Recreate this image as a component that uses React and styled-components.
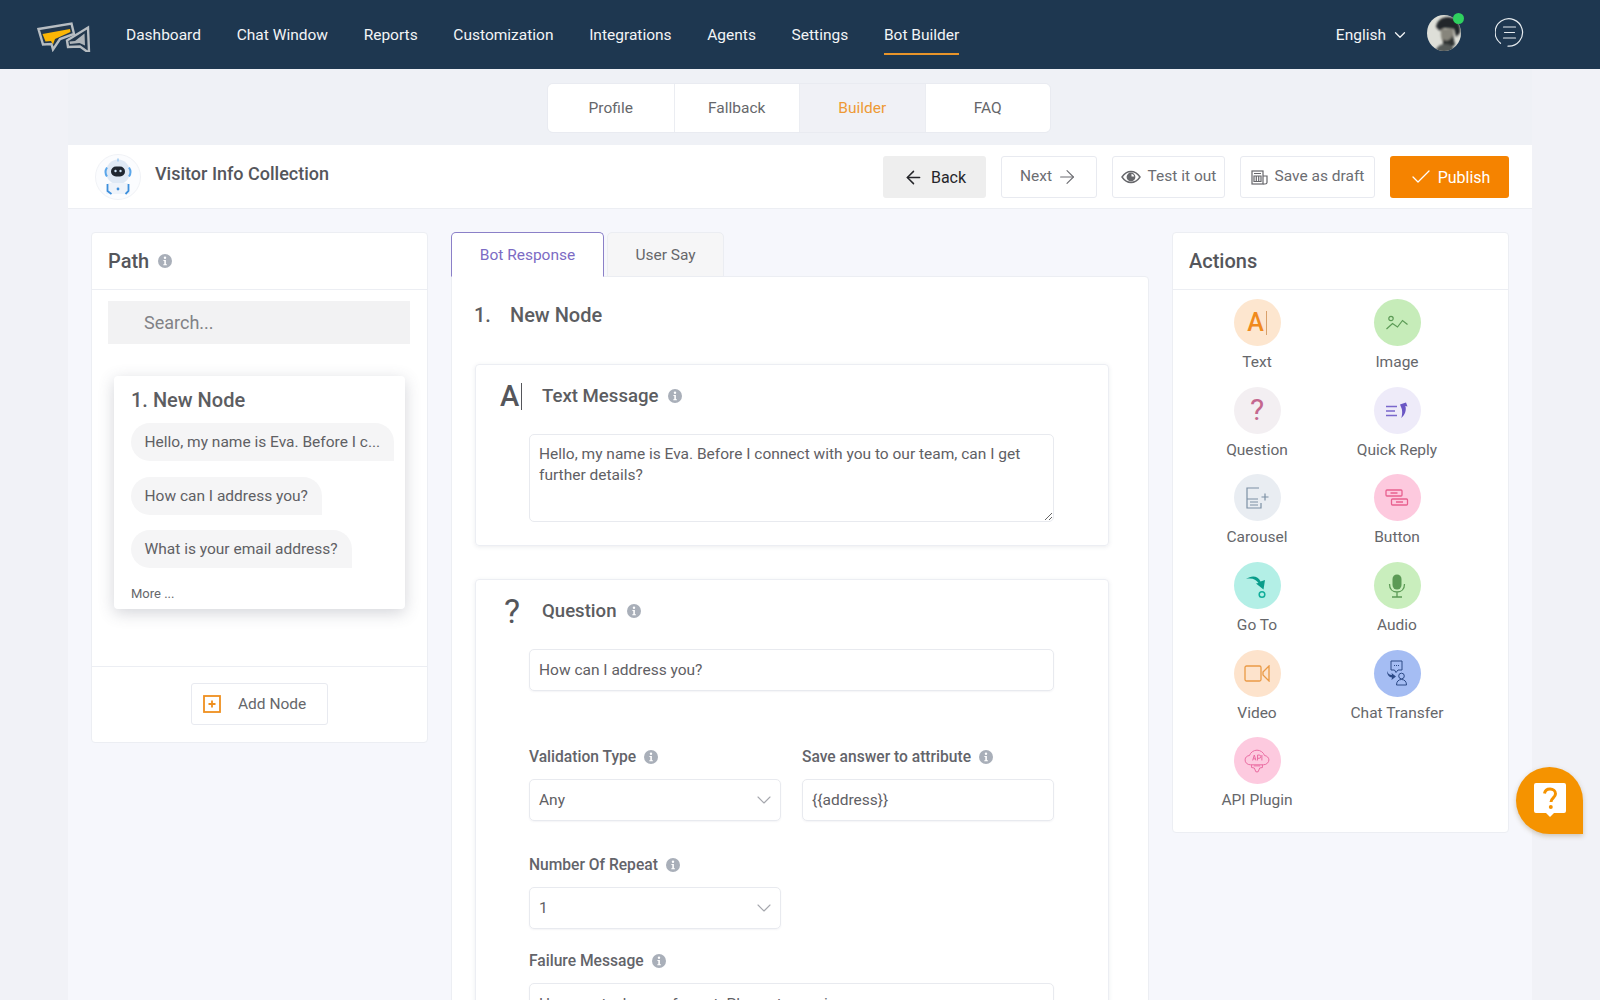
import React from "react";
import styled, { createGlobalStyle } from "styled-components";
import { ArrowLeft, ArrowRight, Check, ChevronDown } from "lucide-react";

const GlobalStyle = createGlobalStyle`
  html, body { margin: 0; padding: 0; height: 100%; }
  body { font-family: Roboto, "Liberation Sans", sans-serif; background: #f1f2f7; color: #5c5d61; }
  * { box-sizing: border-box; }
`;

const Page = styled.div`
  position: relative;
  height: 100vh;
  overflow: hidden;
  display: flex;
  flex-direction: column;
`;

/* top navigation */
const TopBar = styled.header`
  flex: none;
  height: 69px;
  background: #1e3750;
  display: flex;
  align-items: center;
  padding: 0 76px 0 37px;
`;
const Logo = styled.svg`
  flex: none;
  width: 54px;
  height: 34px;
  margin-right: 35px;
`;
const Nav = styled.nav`
  display: flex;
  gap: 35.7px;
`;
const NavLink = styled.a`
  padding: 10px 0 8px;
  line-height: 20px;
  font-size: 15.5px;
  color: #f2f4f6;
  border-bottom: 2px solid ${(p) => (p.$active ? "#e8942a" : "transparent")};
`;
const TopRight = styled.div`
  margin-left: auto;
  margin-bottom: 4px;
  display: flex;
  align-items: center;
`;
const Lang = styled.div`
  display: flex;
  align-items: center;
  gap: 5px;
  margin: 4px 18px 0 0;
  font-size: 15.5px;
  color: #f2f4f6;
`;
const AvatarWrap = styled.div`
  position: relative;
  width: 34px;
  height: 36px;
  margin-right: 34px;
`;
const OnlineDot = styled.span`
  position: absolute;
  top: -2px;
  right: -3px;
  width: 11px;
  height: 11px;
  border-radius: 50%;
  background: #2fd15f;
`;

/* page body */
const Content = styled.main`
  flex: 1;
  margin: 0 68px;
  background: #f6f7fc;
  min-height: 0;
`;
const TabsRow = styled.div`
  height: 76px;
  padding: 14px 2px 0 0;
  background: #eff1f6;
  display: flex;
  justify-content: center;
`;
const TabGroup = styled.div`
  display: flex;
  height: 50px;
  border: 1px solid #e9ebf1;
  border-radius: 6px;
  overflow: hidden;
`;
const Tab = styled.div`
  width: 125.5px;
  display: flex;
  align-items: center;
  justify-content: center;
  font-size: 15.5px;
  background: ${(p) => (p.$active ? "#f0f1f6" : "#fff")};
  color: ${(p) => (p.$active ? "#ee9a35" : "#66676b")};
  & + & { border-left: 1px solid #ebedf2; }
`;
const ToolBar = styled.div`
  height: 64px;
  background: #fff;
  border-bottom: 1px solid #eceef3;
  display: flex;
  align-items: center;
  padding: 0 23px 0 27px;
`;
const ToolTitle = styled.h1`
  margin: 0 0 7px 14px;
  font-size: 18px;
  font-weight: 500;
  color: #55565b;
`;
const ToolButtons = styled.div`
  margin-left: auto;
  display: flex;
  gap: 15px;
  margin-top: 1px;
`;
const ToolButton = styled.button`
  width: ${(p) => p.$w}px;
  height: 42px;
  padding: 0;
  display: flex;
  align-items: center;
  justify-content: center;
  gap: ${(p) => p.$gap || 7}px;
  font-family: inherit;
  font-size: ${(p) => (p.$tone === "ghost" ? 15.5 : 16)}px;
  border-radius: 3px;
  border: 1px solid ${(p) => (p.$tone === "ghost" ? "#e8eaf0" : "transparent")};
  background: ${(p) =>
    p.$tone === "dark" ? "#eeeeee" : p.$tone === "primary" ? "#f58300" : "#fff"};
  color: ${(p) =>
    p.$tone === "dark" ? "#25262a" : p.$tone === "primary" ? "#fff" : "#6c6d72"};
`;
const GhostLabel = styled.span`
  margin-top: -2px;
`;
const Columns = styled.div`
  display: flex;
  align-items: flex-start;
  gap: 23px;
  padding: 23px 23px 0;
`;
const SidePanel = styled.section`
  flex: none;
  width: 337px;
  background: #fff;
  border: 1px solid #eceef3;
  border-radius: 4px;
`;
const PanelHead = styled.div`
  height: 57px;
  border-bottom: 1px solid #eceef3;
  display: flex;
  align-items: center;
  gap: 9px;
  padding: 0 16px;
  font-size: 20px;
  font-weight: 500;
  color: #55565b;
`;

/* path panel */
const PathBody = styled.div`
  height: 376px;
  padding: 11px 17px 0 16px;
`;
const SearchBox = styled.div`
  height: 43px;
  background: #f2f2f3;
  padding-left: 36px;
  display: flex;
  align-items: center;
  font-size: 18px;
  color: #818286;
`;
const NodeCard = styled.div`
  width: 291px;
  height: 233px;
  margin: 32px 0 0 6px;
  padding: 12px 0 0 17px;
  background: #fff;
  border-radius: 4px;
  box-shadow: 0 4px 16px rgba(70, 75, 95, 0.24);
`;
const NodeTitle = styled.div`
  font-size: 20px;
  font-weight: 500;
  line-height: 24px;
  color: #5c5d61;
`;
const Bubbles = styled.div`
  margin-top: 11px;
  display: flex;
  flex-direction: column;
  align-items: flex-start;
  gap: 15.5px;
`;
const Bubble = styled.div`
  height: 38px;
  padding: 0 14px 0 13.5px;
  display: flex;
  align-items: center;
  font-size: 15.5px;
  color: #5f6064;
  background: #f5f5f6;
  border-radius: 19px 19px 0 19px;
`;
const MoreLink = styled.div`
  margin-top: 18px;
  font-size: 13px;
  color: #66676b;
`;
const PathFoot = styled.div`
  height: 76px;
  border-top: 1px solid #eceef3;
  display: flex;
  justify-content: center;
  padding-top: 16px;
`;
const AddNodeBtn = styled.button`
  width: 137px;
  height: 42px;
  padding: 0 0 0 11px;
  background: #fff;
  border: 1px solid #e8eaf0;
  border-radius: 3px;
  display: flex;
  align-items: center;
  gap: 17px;
  font-family: inherit;
  font-size: 15.5px;
  color: #66676b;
`;

/* centre */
const CenterCol = styled.div`
  flex: none;
  width: 698px;
  display: flex;
  flex-direction: column;
`;
const ResponseTabs = styled.div`
  display: flex;
  gap: 3px;
  height: 45px;
  margin-bottom: -1px;
`;
const ResponseTab = styled.div`
  width: ${(p) => p.$w}px;
  display: flex;
  align-items: center;
  justify-content: center;
  font-size: 15.5px;
  border-radius: 5px 5px 0 0;
  position: relative;
  z-index: 1;
  background: ${(p) => (p.$active ? "#fff" : "#f6f6f7")};
  color: ${(p) => (p.$active ? "#7c6bc4" : "#66676b")};
  border: 1px solid ${(p) => (p.$active ? "#8b80c8" : "#ebedf2")};
  border-bottom: ${(p) => (p.$active ? "1px solid #fff" : "1px solid #ebedf2")};
`;
const CenterPanel = styled.section`
  background: #fff;
  border: 1px solid #eceef3;
  border-radius: 0 4px 0 0;
  padding: 24px 39px 0 23px;
  height: 800px;
`;
const NodeHeading = styled.h2`
  margin: 0 0 35px -1px;
  line-height: 28px;
  font-size: 20px;
  font-weight: 500;
  color: #5c5d61;
  display: flex;
  gap: 19px;
`;
const BlockCard = styled.div`
  border: 1px solid #eceef3;
  border-radius: 4px;
  box-shadow: 0 1px 4px rgba(70, 75, 95, 0.1);
  padding: 19px 54px 23px 24px;
  & + & { margin-top: 33px; }
`;
const BlockHead = styled.div`
  display: flex;
  align-items: center;
  height: 24px;
  margin-bottom: 26px;
`;
const BlockIcon = styled.div`
  width: 42px;
  padding: ${(p) => p.$pad || "0"};
  font-size: ${(p) => p.$size}px;
  font-weight: ${(p) => p.$weight || 400};
  line-height: 24px;
  color: #55565b;
  display: flex;
  align-items: center;
`;
const Caret = styled.span`
  display: inline-block;
  width: 1px;
  height: ${(p) => p.$h}px;
  margin-left: 2px;
  background: ${(p) => p.$color};
`;
const BlockTitle = styled.div`
  font-size: 18.6px;
  font-weight: 500;
  color: #5c5d61;
  margin-right: 10px;
`;
const BlockBody = styled.div`
  margin-left: 29px;
`;
const MessageArea = styled.textarea`
  display: block;
  width: 100%;
  height: 88px;
  padding: 9px 9px;
  border: 1px solid #e8eaef;
  border-radius: 5px;
  font-family: inherit;
  font-size: 15.5px;
  line-height: 21px;
  color: #5f6064;
  outline: none;
`;
const Field = styled.div`
  height: 42px;
  padding: 0 4px 0 9px;
  display: flex;
  align-items: center;
  justify-content: space-between;
  border: 1px solid #e8eaef;
  border-radius: 5px;
  box-shadow: 0 1px 2px rgba(70, 75, 95, 0.06);
  font-size: 15.5px;
  color: #5f6064;
`;
const FormGrid = styled.div`
  display: grid;
  grid-template-columns: 252px 252px;
  column-gap: 21px;
  margin-top: ${(p) => p.$top}px;
`;
const FormGroup = styled.div`
  min-width: 0;
`;
const Label = styled.div`
  height: 20px;
  margin-bottom: 12px;
  display: flex;
  align-items: center;
  gap: 8px;
  font-size: 15.6px;
  font-weight: 500;
  color: #63646a;
`;

/* actions */
const ActionGrid = styled.div`
  display: grid;
  grid-template-columns: 140px 140px;
  row-gap: 14.7px;
  padding: 9px 0 22px 14px;
`;
const ActionItem = styled.div`
  display: flex;
  flex-direction: column;
  align-items: center;
  font-size: 15.5px;
  line-height: 20px;
  color: #66676b;
`;
const ActionCircle = styled.div`
  width: 47px;
  height: 47px;
  margin-bottom: 6px;
  border-radius: 50%;
  background: ${(p) => p.$bg};
  display: flex;
  align-items: center;
  justify-content: center;
`;
const CircleLetter = styled.span`
  font-size: ${(p) => p.$size}px;
  font-weight: ${(p) => p.$weight};
  color: ${(p) => p.$color};
  display: flex;
  align-items: center;
`;
const HelpFab = styled.button`
  position: absolute;
  left: 1516px;
  top: 767px;
  width: 67px;
  height: 67px;
  padding: 0;
  border: 0;
  background: #f59300;
  border-radius: 50% 50% 0 50%;
  box-shadow: 0 2px 5px rgba(120, 90, 30, 0.3);
  display: flex;
  align-items: center;
  justify-content: center;
`;

const InfoDot = () => (
  <svg width="14" height="14" viewBox="0 0 14 14">
    <circle cx="7" cy="7" r="7" fill="#a9afb9" />
    <circle cx="7" cy="3.7" r="1.2" fill="#fff" />
    <path d="M5.4 6h2.5v4.2h1v1.1H5.3v-1.1h1V7.1h-.9z" fill="#fff" />
  </svg>
);

const LogoMark = () => (
  <Logo viewBox="12 10 54 34">
    <path d="M42 32.500 63 19.500l1 24h-2l-7-5-12 .5z" fill="#23384d" stroke="#b7bdc2" strokeWidth="2.400" />
    <path d="M50 33 59.500 25.500l.5 12-5.500-2.500-9.500 1-.5-2.500z" fill="#aeb4b9" />
    <path d="M13.500 21 46.500 15.500 49 26 35 31l-7 10.500-1.500-5.500-8.500.5z" fill="#23384d" stroke="#b7bdc2" strokeWidth="2.400" strokeLinejoin="miter" />
    <path d="M17.500 26 45 21l.5 3-15.500 7-2 5.500-2-3.500-5.500.5z" fill="#fbb605" />
  </Logo>
);

const Avatar = () => (
  <svg width="34" height="36" viewBox="0 0 34 36">
    <defs>
      <clipPath id="avatarClip">
        <ellipse cx="17" cy="18" rx="17" ry="18" />
      </clipPath>
      <filter id="avatarSoft">
        <feGaussianBlur stdDeviation="0.9" />
      </filter>
    </defs>
    <g clipPath="url(#avatarClip)">
      <rect width="34" height="36" fill="#dedfd8" />
      <g filter="url(#avatarSoft)">
        <path d="M9 12C10 4 18 0 26 3c6 3 8 9 7 15l-4 4-2-8-10-1-4 3z" fill="#23272a" />
        <path d="M14 14h12c2 6 0 14-6 15-5 0-7-7-6-15z" fill="#87857b" />
        <path d="M16 24c3 3 7 2 10-4l2 10-8 4-4-4z" fill="#2f3232" />
        <path d="M8 38c1-6 5-9 10-9s9 3 11 9z" fill="#555a58" />
      </g>
    </g>
  </svg>
);

const MenuCircle = () => (
  <svg width="29" height="29" viewBox="0 0 29 29" fill="none" stroke="#e6ebef" strokeWidth="1.2" strokeLinecap="round">
    <path d="M5.500 25.300A13.700 13.700 0 1 1 13 28.100" />
    <path d="M8.500 9h12M9.500 14.500h10M8.500 20h12" />
  </svg>
);

const RobotBadge = () => (
  <svg width="46" height="46" viewBox="0 0 46 46" style={{ flex: "none" }}>
    <circle cx="23" cy="23" r="22.500" fill="#fbfcfe" stroke="#f0f2f6" />
    <ellipse cx="23" cy="18" rx="12" ry="12.500" fill="#dfe9f5" />
    <path d="M12 13.500c-2 3-2 6 0 9M34 13.500c2 3 2 6 0 9" stroke="#5aa6ea" strokeWidth="2" fill="none" />
    <rect x="16" y="12.500" width="14" height="10" rx="5" fill="#1f2630" />
    <circle cx="20.500" cy="17" r="1.200" fill="#cfe4f8" />
    <circle cx="25.500" cy="17" r="1.200" fill="#cfe4f8" />
    <path d="M23 4.500v3" stroke="#9cc8f0" strokeWidth="1.500" />
    <path d="M13 29h20l2 11H11z" fill="#eef3fa" />
    <path d="M12.500 30v7l4 3M33.500 30v7l-3 3" stroke="#3d8fdc" strokeWidth="1.800" fill="none" />
    <circle cx="23" cy="35" r="1.400" fill="#3d8fdc" />
  </svg>
);

const EyeIcon = () => (
  <svg width="20" height="14" viewBox="0 0 20 14">
    <path d="M1 7c2.500-3.700 5.500-5.500 9-5.500s6.500 1.800 9 5.500c-2.500 3.700-5.500 5.500-9 5.500S3.500 10.700 1 7z" fill="none" stroke="#66676b" strokeWidth="1.400" />
    <circle cx="10" cy="7" r="4.400" fill="#66676b" />
    <path d="M10.500 3.800a3.300 3.300 0 0 1 2.800 2.800h-2.800z" fill="#fff" />
  </svg>
);

const DraftIcon = () => (
  <svg width="17" height="15" viewBox="0 0 17 15" fill="none" stroke="#66676b" strokeWidth="1.200">
    <rect x="1" y="1" width="11" height="13" />
    <path d="M3 3.500h7M3 6h7v5.500H3zM5.300 6v5.500M7.700 6v5.500" />
    <path d="M12 6h4v6.500c0 1-1 1.500-2 1.500h-2" />
  </svg>
);

const PlusSquare = () => (
  <svg width="18" height="18" viewBox="0 0 18 18" fill="none" stroke="#ef8f1f" strokeWidth="1.800">
    <rect x="1" y="1" width="16" height="16" />
    <path d="M9 5.500v7M5.500 9h7" />
  </svg>
);

const ImageGlyph = () => (
  <svg width="24" height="18" viewBox="0 0 24 18" fill="none" stroke="#5b9a55" strokeWidth="1.200">
    <circle cx="6" cy="4.500" r="2.200" />
    <path d="M1.500 15 7.500 9.500l5 3.500 5-6.500 5 4" />
  </svg>
);

const QuickReplyGlyph = () => (
  <svg width="24" height="18" viewBox="0 0 24 18" fill="none">
    <path d="M1 5.500h11M1 10h9M1 14.500h11" stroke="#7a67cc" strokeWidth="1.500" />
    <path d="M15 3.500 21 1.500l1.500 4-2.200-.5c1.500 4-.5 9-4 12 1-3 1.500-8-.5-11.500z" fill="#6a56c4" />
  </svg>
);

const CarouselGlyph = () => (
  <svg width="24" height="22" viewBox="0 0 24 22" fill="none" stroke="#7c90a4" strokeWidth="1.200">
    <path d="M14 1H2v20h14v-5M2 12h11" />
    <path d="M5 15h8M5 18h8" strokeWidth="1" />
    <path d="M20 6.500v7M16.500 10h7" />
  </svg>
);

const ButtonGlyph = () => (
  <svg width="24" height="18" viewBox="0 0 24 18" fill="none" stroke="#e8608f" strokeWidth="1.300">
    <rect x="1" y="1" width="16" height="6" rx="1" />
    <rect x="6.500" y="10" width="16" height="6" rx="1" />
    <path d="M5.500 4h7M11 13h7" />
  </svg>
);

const GoToGlyph = () => (
  <svg width="24" height="26" viewBox="0 0 24 26" fill="none">
    <path d="M1 6c5.500-4 12-3.500 14.500 2.500L20 7l-1.500 9.500-7.500-6 2.500-.5C11 6.500 7 4.500 1 6z" fill="#0a9c8a" />
    <circle cx="17" cy="21.500" r="2.800" stroke="#11ad9a" strokeWidth="1.500" />
  </svg>
);

const MicGlyph = () => (
  <svg width="18" height="24" viewBox="0 0 18 24" fill="none">
    <rect x="4.500" y="0.500" width="9" height="15" rx="4.500" fill="#5b9a55" />
    <path d="M1.500 10c0 5 3 8 7.500 8s7.500-3 7.500-8M9 18v4.500M4 23h10" stroke="#5b9a55" strokeWidth="1.300" />
  </svg>
);

const VideoGlyph = () => (
  <svg width="26" height="17" viewBox="0 0 26 17" fill="none" stroke="#ea9a45" strokeWidth="1.300">
    <rect x="1" y="1" width="16" height="15" rx="1.500" />
    <path d="M25 1 19 7v3l6 6z" />
  </svg>
);

const TransferGlyph = () => (
  <svg width="22" height="26" viewBox="0 0 22 26" fill="none" stroke="#2c4a86" strokeWidth="1">
    <path d="M5 1h11v9h-4l-2 2.500L8.500 10H5z" />
    <path d="M8 5.500h1M10 5.500h1M12 5.500h1" />
    <path d="M1 11c1 3 3 4 5 4l-.5-2L10 16.500 5.500 20l.5-2.500c-3 0-5-3-5-6.500z" fill="#2c4a86" stroke="none" />
    <circle cx="15.500" cy="16" r="2.800" />
    <path d="M10.500 25c0-3.500 2-5.500 5-5.500s5 2 5 5.500z" />
  </svg>
);

const ApiGlyph = () => (
  <svg width="26" height="26" viewBox="0 0 24 24" fill="none" stroke="#e96aa0" strokeWidth="0.900">
    <path d="M6 15.500c-3 0-5-2-5-4.500s2-4 4-4c1-3 4-5 7-5s6 2 7 5c2 0 4 2 4 4s-2 4.500-5 4.500z" />
    <path d="M7 15.500v2.500l2.500.5L11 22h2l1.500-3.500L17 18v-2.500M9 16.500h6" />
    <path d="M8 11.500 9.500 6.500l1.500 5M8.500 10h2M12.500 11.500v-5H14a1.500 1.500 0 0 1 0 3h-1.500M16.500 6.500v5" />
  </svg>
);

const HelpBubble = () => (
  <svg width="32" height="35" viewBox="0 0 32 35">
    <path d="M2 0h28a2 2 0 0 1 2 2v26a2 2 0 0 1-2 2H20l-4 4-4-4H2a2 2 0 0 1-2-2V2a2 2 0 0 1 2-2z" fill="#fff" />
    <path d="M10.500 10.500c.5-3 2.800-4.500 5.500-4.500 3.200 0 5.500 2 5.500 4.800 0 4-4.500 4.200-4.500 8.200" fill="none" stroke="#f59300" strokeWidth="3" />
    <circle cx="16.800" cy="24" r="2" fill="#f59300" />
  </svg>
);

const navItems = ["Dashboard", "Chat Window", "Reports", "Customization", "Integrations", "Agents", "Settings", "Bot Builder"];
const pageTabs = ["Profile", "Fallback", "Builder", "FAQ"];
const bubbles = ["Hello, my name is Eva. Before I c...", "How can I address you?", "What is your email address?"];

const actions = [
  {
    name: "Text",
    bg: "#fde6cf",
    icon: (
      <CircleLetter $size={25} $weight={500} $color="#f08a1d">
        A<Caret $h={24} $color="#d9a06a" />
      </CircleLetter>
    ),
  },
  { name: "Image", bg: "#c6ecb9", icon: <ImageGlyph /> },
  { name: "Question", bg: "#f3eff2", icon: <CircleLetter $size={30} $weight={400} $color="#c4688f">?</CircleLetter> },
  { name: "Quick Reply", bg: "#eeebf9", icon: <QuickReplyGlyph /> },
  { name: "Carousel", bg: "#e9edf2", icon: <CarouselGlyph /> },
  { name: "Button", bg: "#fdc9de", icon: <ButtonGlyph /> },
  { name: "Go To", bg: "#b3efe6", icon: <GoToGlyph /> },
  { name: "Audio", bg: "#c9eebd", icon: <MicGlyph /> },
  { name: "Video", bg: "#fde3cc", icon: <VideoGlyph /> },
  { name: "Chat Transfer", bg: "#a5bdf3", icon: <TransferGlyph /> },
  { name: "API Plugin", bg: "#fdcadf", icon: <ApiGlyph /> },
];

export default function App() {
  return (
    <>
      <GlobalStyle />
      <Page>
        <TopBar>
          <LogoMark />
          <Nav>
            {navItems.map((item) => (
              <NavLink key={item} $active={item === "Bot Builder"}>
                {item}
              </NavLink>
            ))}
          </Nav>
          <TopRight>
            <Lang>
              English <ChevronDown size={18} strokeWidth={1.7} />
            </Lang>
            <AvatarWrap>
              <Avatar />
              <OnlineDot />
            </AvatarWrap>
            <MenuCircle />
          </TopRight>
        </TopBar>

        <Content>
          <TabsRow>
            <TabGroup>
              {pageTabs.map((tab) => (
                <Tab key={tab} $active={tab === "Builder"}>
                  {tab}
                </Tab>
              ))}
            </TabGroup>
          </TabsRow>

          <ToolBar>
            <RobotBadge />
            <ToolTitle>Visitor Info Collection</ToolTitle>
            <ToolButtons>
              <ToolButton $w={103} $tone="dark">
                <ArrowLeft size={21} strokeWidth={1.7} /> Back
              </ToolButton>
              <ToolButton $w={96} $tone="ghost" $gap={4}>
                <GhostLabel>Next</GhostLabel> <ArrowRight size={22} strokeWidth={1.2} />
              </ToolButton>
              <ToolButton $w={113} $tone="ghost">
                <EyeIcon /> <GhostLabel>Test it out</GhostLabel>
              </ToolButton>
              <ToolButton $w={135} $tone="ghost">
                <DraftIcon /> <GhostLabel>Save as draft</GhostLabel>
              </ToolButton>
              <ToolButton $w={119} $tone="primary" $gap={5}>
                <Check size={24} strokeWidth={1.3} /> Publish
              </ToolButton>
            </ToolButtons>
          </ToolBar>

          <Columns>
            <SidePanel>
              <PanelHead>
                Path <InfoDot />
              </PanelHead>
              <PathBody>
                <SearchBox>Search...</SearchBox>
                <NodeCard>
                  <NodeTitle>1. New Node</NodeTitle>
                  <Bubbles>
                    {bubbles.map((text) => (
                      <Bubble key={text}>{text}</Bubble>
                    ))}
                  </Bubbles>
                  <MoreLink>More ...</MoreLink>
                </NodeCard>
              </PathBody>
              <PathFoot>
                <AddNodeBtn>
                  <PlusSquare /> Add Node
                </AddNodeBtn>
              </PathFoot>
            </SidePanel>

            <CenterCol>
              <ResponseTabs>
                <ResponseTab $w={153} $active>
                  Bot Response
                </ResponseTab>
                <ResponseTab $w={117}>User Say</ResponseTab>
              </ResponseTabs>
              <CenterPanel>
                <NodeHeading>
                  <span>1.</span> New Node
                </NodeHeading>

                <BlockCard>
                  <BlockHead>
                    <BlockIcon $size={29} $weight={500}>
                      A<Caret $h={27} $color="#55565b" />
                    </BlockIcon>
                    <BlockTitle>Text Message</BlockTitle>
                    <InfoDot />
                  </BlockHead>
                  <BlockBody>
                    <MessageArea
                      readOnly
                      defaultValue="Hello, my name is Eva. Before I connect with you to our team, can I get further details?"
                    />
                  </BlockBody>
                </BlockCard>

                <BlockCard>
                  <BlockHead>
                    <BlockIcon $size={34} $pad="0 0 0 4px">?</BlockIcon>
                    <BlockTitle>Question</BlockTitle>
                    <InfoDot />
                  </BlockHead>
                  <BlockBody>
                    <Field>How can I address you?</Field>
                    <FormGrid $top={56}>
                      <FormGroup>
                        <Label>
                          Validation Type <InfoDot />
                        </Label>
                        <Field>
                          Any <ChevronDown size={24} strokeWidth={1.1} color="#a5a7ad" />
                        </Field>
                      </FormGroup>
                      <FormGroup>
                        <Label>
                          Save answer to attribute <InfoDot />
                        </Label>
                        <Field>{"{{address}}"}</Field>
                      </FormGroup>
                    </FormGrid>
                    <FormGrid $top={34}>
                      <FormGroup>
                        <Label>
                          Number Of Repeat <InfoDot />
                        </Label>
                        <Field>
                          1 <ChevronDown size={24} strokeWidth={1.1} color="#a5a7ad" />
                        </Field>
                      </FormGroup>
                    </FormGrid>
                    <FormGrid $top={22}>
                      <FormGroup>
                        <Label>
                          Failure Message <InfoDot />
                        </Label>
                      </FormGroup>
                    </FormGrid>
                    <Field>Hmm, not a known format. Please try again</Field>
                  </BlockBody>
                </BlockCard>
              </CenterPanel>
            </CenterCol>

            <SidePanel>
              <PanelHead>Actions</PanelHead>
              <ActionGrid>
                {actions.map((action) => (
                  <ActionItem key={action.name}>
                    <ActionCircle $bg={action.bg}>{action.icon}</ActionCircle>
                    {action.name}
                  </ActionItem>
                ))}
              </ActionGrid>
            </SidePanel>
          </Columns>
        </Content>

        <HelpFab aria-label="Help">
          <HelpBubble />
        </HelpFab>
      </Page>
    </>
  );
}
